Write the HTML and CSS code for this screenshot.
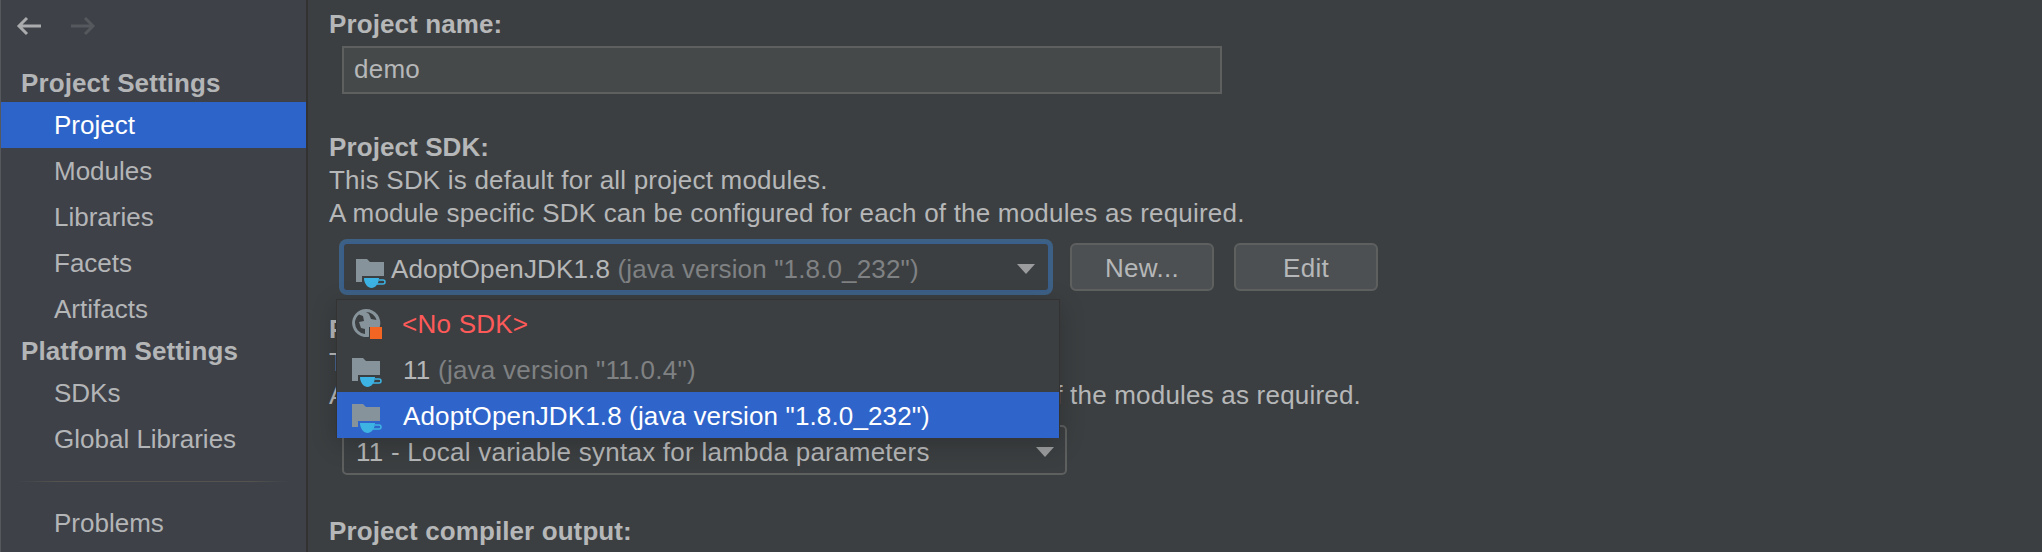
FILE: index.html
```html
<!DOCTYPE html>
<html lang="en">
<head>
    <meta charset="UTF-8">
    <title>Project Structure</title>
    <link rel="stylesheet" href="styles.css">
</head>
<body>
    <svg class="defs" width="0" height="0">
        <symbol id="jdk" viewBox="0 0 32 32">
            <path fill="#87939a" d="M2 2H13L16 5H30V19H8V25H2Z"/>
            <path fill="#3db3e3" d="M10 21H25C25 27 21 31 17.5 31C14 31 10 27 10 21Z"/>
            <path fill="none" stroke="#3db3e3" stroke-width="1.5" d="M25 23H29A2 2 0 0 1 29 27H23"/>
        </symbol>
    </svg>

    <aside class="sidebar">
        <div class="nav-arrows">
            <svg class="arrow" width="26" height="20" viewBox="0 0 26 20"><path d="M25 10H3M11 2L3 10L11 18" fill="none" stroke="#a9abad" stroke-width="3"/></svg>
            <svg class="arrow" width="26" height="20" viewBox="0 0 26 20"><path d="M1 10H23M15 2L23 10L15 18" fill="none" stroke="#55585c" stroke-width="3"/></svg>
        </div>
        <div class="side-head first">Project Settings</div>
        <div class="side-item selected">Project</div>
        <div class="side-item">Modules</div>
        <div class="side-item">Libraries</div>
        <div class="side-item">Facets</div>
        <div class="side-item">Artifacts</div>
        <div class="side-head">Platform Settings</div>
        <div class="side-item">SDKs</div>
        <div class="side-item">Global Libraries</div>
        <div class="side-sep"></div>
        <div class="side-item">Problems</div>
    </aside>

    <main class="content">
        <h4 class="label name-label">Project name:</h4>
        <div class="text-field">demo</div>

        <h4 class="label sdk-label">Project SDK:</h4>
        <p class="hint">This SDK is default for all project modules.</p>
        <p class="hint">A module specific SDK can be configured for each of the modules as required.</p>

        <div class="sdk-row">
            <div class="combo focused">
                <svg class="jdk-icon" width="32" height="32"><use href="#jdk"/></svg>
                <span class="combo-text">AdoptOpenJDK1.8 <span class="muted">(java version "1.8.0_232")</span></span>
                <span class="caret"></span>
            </div>
            <button class="btn">New...</button>
            <button class="btn">Edit</button>
        </div>

        <div class="popup">
            <div class="popup-row">
                <svg class="globe-icon" width="32" height="32" viewBox="0 0 32 32">
                    <path fill="#87939a" fill-rule="evenodd" d="M16 2A14 14 0 1 0 19 29.7V20H29.7A14 14 0 0 0 16 2ZM16 5A11 11 0 0 1 26.5 13L21 12L19 7ZM5 16A11 11 0 0 1 9 7.5L13 9L14 14L9 15L11 21L15 22L15 26.9A11 11 0 0 1 5 16Z"/>
                    <rect x="20" y="20" width="12" height="12" fill="#f26522"/>
                </svg>
                <span class="no-sdk">&lt;No SDK&gt;</span>
            </div>
            <div class="popup-row">
                <svg class="jdk-icon" width="32" height="32"><use href="#jdk"/></svg>
                <span>11 <span class="muted">(java version "11.0.4")</span></span>
            </div>
            <div class="popup-row current">
                <svg class="jdk-icon" width="32" height="32"><use href="#jdk"/></svg>
                <span>AdoptOpenJDK1.8 (java version "1.8.0_232")</span>
            </div>
        </div>

        <h4 class="label level-label">Project language level:</h4>
        <p class="hint">This language level is default for all project modules.</p>
        <p class="hint">A module specific language level can be configured for each of the modules as required.</p>

        <div class="combo level-combo">
            <span class="combo-text">11 - Local variable syntax for lambda parameters</span>
            <span class="caret"></span>
        </div>

        <h4 class="label output-label">Project compiler output:</h4>
    </main>
</body>
</html>
```

FILE: styles.css
```css
* {
    box-sizing: border-box;
}

html, body {
    height: 100%;
}

body {
    margin: 0;
    display: flex;
    overflow: hidden;
    background-color: #3c3f41;
    color: #b6b7b8;
    font-family: "Liberation Sans", Arial, sans-serif;
    font-size: 26px;
}

.defs {
    position: absolute;
}

/* left column */
.sidebar {
    width: 308px;
    flex-shrink: 0;
    background-color: #3e4148;
    border-left: 1px solid #55585c;
    border-right: 2px solid #323232;
}

.nav-arrows {
    display: flex;
    gap: 28px;
    height: 60px;
    padding: 16px 0 0 15px;
}

.side-head {
    height: 38px;
    line-height: 38px;
    padding-left: 20px;
    font-weight: bold;
    letter-spacing: 0.1px;
    color: #b4b5b7;
}

.side-head.first {
    height: 42px;
    line-height: 46px;
}

.side-item {
    height: 46px;
    line-height: 46px;
    padding-left: 53px;
    color: #b4b5b7;
}

.side-item.selected {
    background-color: #2d64c9;
    color: #fff;
}

.side-sep {
    height: 38px;
    margin: 0 16px;
    padding-top: 19px;
}

.side-sep::before {
    content: "";
    display: block;
    height: 1px;
    background: linear-gradient(to right, #3e4148, #54534f 15%, #54534f 85%, #3e4148);
}

/* right side */
.content {
    position: relative;
    flex: 1;
    padding-left: 21px;
    letter-spacing: 0.25px;
}

.label {
    margin: 0;
    font-size: 26px;
    font-weight: bold;
    letter-spacing: 0.1px;
    line-height: 34px;
    color: #b6b7b8;
}

.name-label {
    padding-top: 7px;
    height: 46px;
}

.text-field {
    width: 880px;
    height: 48px;
    margin-left: 13px;
    padding-left: 10px;
    line-height: 42px;
    background-color: #45494a;
    border: 2px solid #5e6060;
}

.sdk-label {
    margin-top: 36px;
}

.hint {
    margin: 0;
    height: 33px;
    line-height: 33px;
    letter-spacing: 0.2px;
    white-space: nowrap;
}

.sdk-row {
    display: flex;
    align-items: center;
    gap: 20px;
    margin: 12px 0 0 13px;
}

.combo {
    display: flex;
    align-items: center;
    height: 48px;
    border: 2px solid #5e6060;
    border-radius: 5px;
    background-color: #3c3f41;
    padding: 4px 0 0 12px;
}

.combo.focused {
    width: 708px;
    height: 50px;
    border-color: #3a5f8a;
    box-shadow: 0 0 0 3px #3d6185;
    padding-left: 10px;
    letter-spacing: 0.15px;
}

.combo-text {
    flex: 1;
    white-space: nowrap;
}

.muted {
    color: #7f8183;
}

.caret {
    width: 0;
    height: 0;
    margin-right: 13px;
    border-left: 9px solid transparent;
    border-right: 9px solid transparent;
    border-top: 10px solid #9a9c9e;
}

.jdk-icon {
    flex-shrink: 0;
    margin: 8px 5px 0 0;
}

.globe-icon {
    flex-shrink: 0;
    margin: 0 20px 3px 0;
}

.btn {
    width: 144px;
    height: 48px;
    padding: 3px 0 0;
    border: 2px solid #5e6060;
    border-radius: 6px;
    background-color: #4c5052;
    color: #b6b7b8;
    font-family: inherit;
    font-size: 26px;
    letter-spacing: 0.3px;
}

/* dropdown list, sits over the language level block */
.popup {
    position: absolute;
    left: 28px;
    top: 299px;
    width: 724px;
    background-color: #3c3f41;
    border: 1px solid #333333;
    border-bottom: 0;
    box-shadow: 0 6px 24px rgba(0, 0, 0, 0.2);
}

.popup-row {
    display: flex;
    align-items: center;
    height: 46px;
    padding: 3px 0 0 13px;
    white-space: nowrap;
}

.popup-row .jdk-icon {
    margin: 3px 21px 0 0;
}

.popup-row.current {
    background-color: #2f65ca;
    color: #fff;
    letter-spacing: 0.13px;
}

.no-sdk {
    color: #ff5a5a;
}

.level-label {
    margin-top: 20px;
}

.level-combo {
    width: 725px;
    height: 50px;
    margin: 13px 0 0 13px;
}

.level-combo .caret {
    margin-right: 11px;
}

.output-label {
    margin-top: 39px;
}
```
